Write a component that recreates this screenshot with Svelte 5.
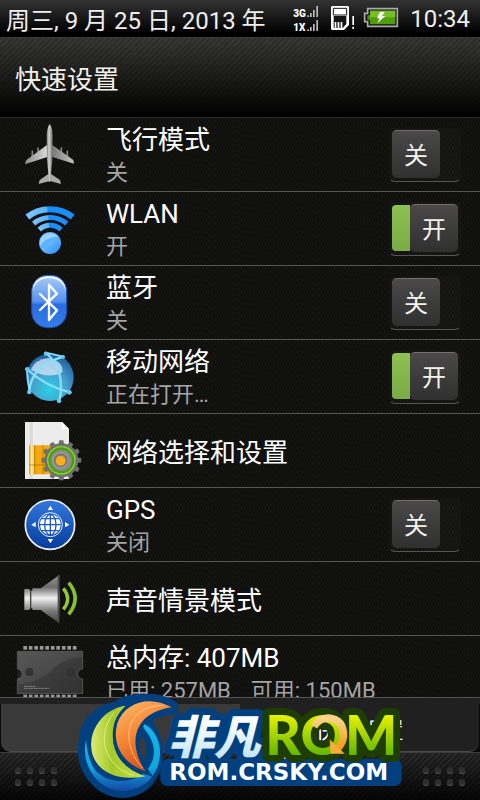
<script lang="ts">
	interface Setting {
		id: string;
		name: string;
		status?: string;
		detail?: string;
		on?: boolean;
	}

	let settings = $state<Setting[]>([
		{ id: 'airplane', name: '飞行模式', status: '关', on: false },
		{ id: 'wlan', name: 'WLAN', status: '开', on: true },
		{ id: 'bluetooth', name: '蓝牙', status: '关', on: false },
		{ id: 'mobile', name: '移动网络', status: '正在打开…', on: true },
		{ id: 'sim', name: '网络选择和设置' },
		{ id: 'gps', name: 'GPS', status: '关闭', on: false },
		{ id: 'sound', name: '声音情景模式' },
		{ id: 'memory', name: '总内存: 407MB', status: '已用: 257MB', detail: '可用: 150MB' }
	]);

	const teeth = Array.from({ length: 12 }, (_, i) => i * 30);
	const pins = Array.from({ length: 10 }, (_, i) => 70 + i * 16.5);

	function toggle(setting: Setting) {
		setting.on = !setting.on;
		setting.status = setting.on ? '开' : '关';
	}
</script>

{#snippet airplane()}
	<svg class="icon" viewBox="39 9 216 216">
		<defs>
			<linearGradient id="metal" x1="0" x2="1">
				<stop offset="0" stop-color="#8a8a8a" />
				<stop offset="0.45" stop-color="#d8d8d8" />
				<stop offset="0.5" stop-color="#ededed" />
				<stop offset="0.54" stop-color="#777" />
				<stop offset="1" stop-color="#c4c4c4" />
			</linearGradient>
			<linearGradient id="body" x1="0" x2="1">
				<stop offset="0" stop-color="#777" />
				<stop offset="0.4" stop-color="#d4d4d4" />
				<stop offset="1" stop-color="#686868" />
			</linearGradient>
		</defs>
		<path d="M97 105v18M114 96v18M184 96v18M202 105v18" stroke="#858585" stroke-width="5" stroke-linecap="round" />
		<path d="M141 87L78 133L75 145L142 123H157L222 143L220 132L157 87Z" fill="url(#metal)" />
		<path d="M145 174L119 192L116 204L150 195L183 204L180 192L153 174Z" fill="#aaa" />
		<path d="M149 24C156 32 158 46 158 60L157 130L151 197H147L141 130L140 60C140 46 143 32 149 24Z" fill="url(#body)" />
	</svg>
{/snippet}

{#snippet wlan()}
	<svg class="icon" viewBox="39 231 216 216">
		<defs>
			<linearGradient id="wave" x1="0" x2="1">
				<stop offset="0" stop-color="#7cc4ff" />
				<stop offset="0.42" stop-color="#5ab4ff" />
				<stop offset="0.46" stop-color="#1590ff" />
				<stop offset="1" stop-color="#1c8ffa" />
			</linearGradient>
			<linearGradient id="ball" x1="0" y1="0" x2="1" y2="1">
				<stop offset="0" stop-color="#4aa6fa" />
				<stop offset="0.5" stop-color="#62b6ff" />
				<stop offset="1" stop-color="#2a8cf0" />
			</linearGradient>
		</defs>
		<g fill="none" stroke="url(#wave)">
			<path d="M82 303A112 112 0 0 1 218 303" stroke-width="18" />
			<path d="M101 323A76 76 0 0 1 200 323" stroke-width="15" />
			<path d="M118 341A47 47 0 0 1 183 341" stroke-width="15" />
		</g>
		<circle cx="150" cy="381" r="33" fill="url(#ball)" />
		<path d="M122 391Q132 366 173 361Q152 343 130 358Q115 371 122 391Z" fill="#9bd3ff" />
	</svg>
{/snippet}

{#snippet bluetooth()}
	<svg class="icon" viewBox="39 3 216 216">
		<defs>
			<linearGradient id="bt" x1="0" y1="0" x2="0" y2="1">
				<stop offset="0" stop-color="#a9cdf8" />
				<stop offset="0.5" stop-color="#5791ee" />
				<stop offset="0.56" stop-color="#2a6ce2" />
				<stop offset="1" stop-color="#337eea" />
			</linearGradient>
		</defs>
		<rect x="95" y="28" width="105" height="157" rx="47" fill="url(#bt)" stroke="#1d4fa8" stroke-width="3" />
		<path d="M98 76Q98 32 147 31Q196 32 197 76Q188 38 147 37Q106 38 98 76Z" fill="#eaf5ff" />
		<path d="M120 84L171 133L147 162V56L171 83L120 132" fill="none" stroke="#fff" stroke-width="7" stroke-linejoin="round" stroke-linecap="round" />
	</svg>
{/snippet}

{#snippet mobile()}
	<svg class="icon" viewBox="39 225 216 216">
		<defs>
			<radialGradient id="globe" cx="0.48" cy="0.75" r="0.75">
				<stop offset="0" stop-color="#2bd0e4" />
				<stop offset="0.5" stop-color="#479fce" />
				<stop offset="1" stop-color="#1b5b9c" />
			</radialGradient>
		</defs>
		<circle cx="150" cy="334" r="71" fill="url(#globe)" />
		<path d="M92 312Q104 280 146 276Q188 284 188 318Q150 342 92 312Z" fill="#d5e9f8" opacity="0.75" />
		<g fill="none" stroke="#8be0fb" stroke-width="7" stroke-linecap="round">
			<path d="M80 309Q138 362 211 379" />
			<path d="M137 260Q198 310 178 407" />
			<path d="M88 377Q92 300 190 272" />
			<path d="M80 309L88 377M137 260L190 272" stroke-width="5" />
		</g>
		<g fill="#63c9ee">
			<circle cx="82" cy="310" r="7" />
			<circle cx="137" cy="263" r="6" />
			<circle cx="189" cy="273" r="6" />
			<circle cx="208" cy="379" r="7" />
			<circle cx="88" cy="378" r="7" />
			<circle cx="177" cy="404" r="7" />
		</g>
	</svg>
{/snippet}

{#snippet sim()}
	<svg class="icon" viewBox="39 6 216 216">
		<path d="M75 27H186L207 48V198H75Z" fill="#ececec" />
		<path d="M91 27V198M96 27V198" stroke="#c3c3c3" stroke-width="2" />
		<path d="M186 27V48H207Z" fill="#fff" />
		<path d="M87 97H188V184H87Z" fill="#f6a90c" />
		<path d="M94 97V184M99 97V184" stroke="#fff0c8" stroke-width="4" />
		<path d="M87 156H180M129 97V184M104 97V184" stroke="#9d6a00" stroke-width="2" />
		<g fill="#707070">
			{#each teeth as angle}
				<path d="M175 96L178 82H190L193 96Z" transform="rotate({angle} 184 142)" />
			{/each}
			<circle cx="184" cy="142" r="51" />
		</g>
		<circle cx="184" cy="142" r="38" fill="#8b8b8b" stroke="#4e9b13" stroke-width="12" />
		<circle cx="184" cy="142" r="41" fill="none" stroke="#8bd13c" stroke-width="4" />
		<circle cx="182" cy="142" r="23" fill="#777" stroke="#a7a7a7" stroke-width="3" />
		<circle cx="182" cy="143" r="15" fill="#f7ae19" />
	</svg>
{/snippet}

{#snippet gps()}
	<svg class="icon" viewBox="39 228 216 216">
		<defs>
			<linearGradient id="gps" x1="0" y1="0" x2="0" y2="1">
				<stop offset="0" stop-color="#3478de" />
				<stop offset="1" stop-color="#053c9c" />
			</linearGradient>
		</defs>
		<circle cx="150" cy="335" r="74" fill="url(#gps)" stroke="#f0f3f8" stroke-width="5" />
		<g fill="#fff">
			<path d="M151 278L159 291H143Z" />
			<path d="M151 391L159 378H143Z" />
			<path d="M94 335L107 327V343Z" />
			<path d="M208 335L195 327V343Z" />
			<circle cx="151" cy="335" r="31" />
		</g>
		<circle cx="151" cy="335" r="36" fill="none" stroke="#e4edfb" stroke-width="3" />
		<g fill="none" stroke="#1c5abd" stroke-width="4">
			<path d="M151 304V366M120 335H182M126 317H176M126 353H176" />
			<ellipse cx="151" cy="335" rx="17" ry="31" />
		</g>
	</svg>
{/snippet}

{#snippet sound()}
	<svg class="icon" viewBox="39 6 216 216">
		<defs>
			<linearGradient id="cone" x1="0" y1="0" x2="0" y2="1">
				<stop offset="0" stop-color="#969696" />
				<stop offset="0.25" stop-color="#6c6c6c" />
				<stop offset="0.48" stop-color="#f0f0f0" />
				<stop offset="0.75" stop-color="#777" />
				<stop offset="1" stop-color="#3f3f3f" />
			</linearGradient>
		</defs>
		<path d="M73 84H87L91 89H97V82H122L178 42V187L122 147H97V142H91L87 147H73Z" fill="url(#cone)" />
		<path d="M92 88V142" stroke="#444" stroke-width="4" />
		<path d="M175 44V184" stroke="#4c4c4c" stroke-width="4" />
		<path d="M190 82Q216 113 190 145" fill="none" stroke="#91c83d" stroke-width="10" />
		<path d="M206 65Q245 112 206 160" fill="none" stroke="#83bf37" stroke-width="11" />
	</svg>
{/snippet}

{#snippet memory()}
	<svg class="icon" viewBox="39 228 216 216">
		<defs>
			<linearGradient id="chip" x1="0" y1="0" x2="1" y2="1">
				<stop offset="0" stop-color="#4a4a4a" />
				<stop offset="0.5" stop-color="#3c3c3c" />
				<stop offset="1" stop-color="#303030" />
			</linearGradient>
		</defs>
		{#each pins as x}
			<rect {x} y="255" width="11" height="11" fill="#989898" />
			<rect {x} y="401" width="11" height="10" fill="#989898" />
		{/each}
		<path d="M52 271H248V324A13 13 0 0 0 248 354V398H52V354A13 13 0 0 0 52 324Z" fill="url(#chip)" stroke="#666" stroke-width="2" />
		<path d="M54 371Q130 360 166 318Q196 290 246 288V273H54Z" fill="#fff" opacity="0.07" />
		<circle cx="88" cy="333" r="11" fill="#343434" stroke="#292929" stroke-width="2" />
		<circle cx="213" cy="333" r="11" fill="#343434" stroke="#292929" stroke-width="2" />
		<path d="M72 376H106M72 382H148" stroke="#aaa" stroke-width="2" stroke-dasharray="4 1" />
	</svg>
{/snippet}

<div class="screen">
	<div class="status-bar">
		<span class="date">周三, 9 月 25 日, 2013 年</span>
		<svg class="status-icons" viewBox="159 21 318 81">
			<g fill="#fff">
				<text class="signal" x="160" y="57">3G</text>
				<text class="signal" x="160" y="99">1X</text>
				<path d="M202 52h5v5h-5zM210 45h5v12h-5zM219 36h5v21h-5zM229 24h5v33h-5z" fill="#bbb" />
				<path d="M202 94h5v5h-5zM210 87h5v12h-5zM219 78h5v21h-5zM229 66h5v33h-5z" fill="#bbb" />
				<path d="M276 24H324L327 27V81L312 96H276L273 93V27Z" />
				<path d="M337 54h5v27h-5zM337 86h5v7h-5z" />
			</g>
			<path d="M280 31H320V51H280Z" fill="#fff" stroke="#151515" stroke-width="3" />
			<path d="M281 54H319V78L309 89H281Z" fill="#151515" />
			<path d="M284 72h5v17h-5zM293 72h5v17h-5zM302 72h5v17h-5z" fill="#fff" />
			<path d="M383 32H472V85H383V71H374V46H383Z" fill="#111" stroke="#aaa" stroke-width="5" />
			<path d="M390 38H466V79H390V65H382V52H390Z" fill="#4f9d0a" />
			<path d="M390 38H466V58H390Z" fill="#78bd25" />
			<path d="M420 42H434L426 54H436L412 76L419 61H411Z" fill="#fff" />
		</svg>
		<time>10:34</time>
	</div>

	<header>
		<h1>快速设置</h1>
	</header>

	<ul class="settings">
		{#each settings as setting (setting.id)}
			<li class="row">
				{#if setting.id === 'airplane'}
					{@render airplane()}
				{:else if setting.id === 'wlan'}
					{@render wlan()}
				{:else if setting.id === 'bluetooth'}
					{@render bluetooth()}
				{:else if setting.id === 'mobile'}
					{@render mobile()}
				{:else if setting.id === 'sim'}
					{@render sim()}
				{:else if setting.id === 'gps'}
					{@render gps()}
				{:else if setting.id === 'sound'}
					{@render sound()}
				{:else}
					{@render memory()}
				{/if}
				<div class="label">
					<div class="name">{setting.name}</div>
					{#if setting.status}
						<div class="status">
							<span>{setting.status}</span>
							{#if setting.detail}<span>{setting.detail}</span>{/if}
						</div>
					{/if}
				</div>
				{#if setting.on !== undefined}
					<button
						class="switch"
						class:on={setting.on}
						type="button"
						role="switch"
						aria-checked={setting.on}
						aria-label={setting.name}
						onclick={() => toggle(setting)}
					>
						<span class="knob">{setting.on ? '开' : '关'}</span>
					</button>
				{/if}
			</li>
		{/each}
	</ul>

	<footer>
		<nav class="tabs">
			<button class="tab" type="button" aria-label="通知"></button>
			<button class="tab current" type="button">快速设置</button>
		</nav>
		<div class="handle">
			<div class="grip">
				{#each { length: 8 } as _}<i></i>{/each}
			</div>
			<div class="grip">
				{#each { length: 8 } as _}<i></i>{/each}
			</div>
		</div>

		<svg class="logo" viewBox="234 42 972 318">
			<defs>
				<linearGradient id="lime" x1="0" y1="0" x2="1" y2="0">
					<stop offset="0" stop-color="#dbe96e" />
					<stop offset="0.4" stop-color="#a4c92a" />
					<stop offset="1" stop-color="#c9df4b" />
				</linearGradient>
				<linearGradient id="orange" x1="0" y1="0" x2="0.5" y2="1">
					<stop offset="0" stop-color="#ffc06c" />
					<stop offset="0.5" stop-color="#f58634" />
					<stop offset="1" stop-color="#cf4f16" />
				</linearGradient>
				<linearGradient id="cyan" x1="0" y1="0" x2="0" y2="1">
					<stop offset="0" stop-color="#14b7e9" />
					<stop offset="0.65" stop-color="#10a6df" />
					<stop offset="1" stop-color="#1447a5" />
				</linearGradient>
				<linearGradient id="ice" x1="0" y1="0" x2="0" y2="1">
					<stop offset="0.3" stop-color="#fff" />
					<stop offset="1" stop-color="#b5def8" />
				</linearGradient>
				<linearGradient id="green" x1="0" y1="0" x2="0" y2="1">
					<stop offset="0.2" stop-color="#eaf300" />
					<stop offset="0.8" stop-color="#66b800" />
				</linearGradient>
				<linearGradient id="gold" x1="0" y1="0" x2="0" y2="1">
					<stop offset="0" stop-color="#f9d58c" />
					<stop offset="1" stop-color="#f39a17" />
				</linearGradient>
			</defs>

			<path d="M858 192L850 238H870Z" fill="#aaa" />

			<g fill="#00407f" stroke="#00407f" stroke-width="42" stroke-linejoin="round">
				<path d="M515 82C450 45 375 65 352 85C300 90 255 140 258 180C240 260 300 335 370 333C440 330 475 270 466 195C455 150 440 130 425 115Q455 92 515 82Z" />
				<path d="M502 258H1184V297H502Z" />
			</g>
			<path d="M258 180C240 260 300 335 370 333C450 330 490 260 478 195C470 160 450 140 432 133C428 138 430 143 434 148C468 190 470 230 445 265C415 310 330 320 285 270C265 240 262 210 258 180Z" fill="url(#cyan)" />
			<path d="M372 80C300 95 262 165 280 225C300 280 360 300 428 288C340 255 305 170 372 80Z" fill="url(#lime)" stroke="url(#lime)" stroke-width="4" />
			<path d="M342 98C282 175 320 262 400 286" fill="none" stroke="#f2f7b9" stroke-width="2" />
			<path
				class="orange"
				d="M515 82C450 45 375 65 352 130C335 190 365 250 437 274C385 200 392 100 515 82Z"
				fill="url(#orange)"
			/>
			<path d="M490 76C365 78 365 200 428 264" fill="none" stroke="#ffd9ae" stroke-width="2" />
			<path d="M424 166Q450 200 432 242Q412 205 424 166Z" fill="#3a3a3a" />

			<g class="cn">
				<text class="face" x="504" y="222">非凡</text>
			</g>
			<g class="rom">
				<text class="face" x="796" y="225">ROM</text>
			</g>
			<path d="M942 140Q957 114 985 114Q1032 118 1031 170Q1027 193 1011 207" fill="none" stroke="url(#gold)" stroke-width="22" />
			<path d="M989 178L992 221H1034Z" fill="#f7ad38" />
			<text class="site" x="508" y="301">ROM.CRSKY.COM</text>
		</svg>
	</footer>
</div>

<style>
	:global(body) {
		margin: 0;
		background: #000;
	}

	.screen {
		display: flex;
		flex-direction: column;
		height: 100vh;
		overflow: hidden;
		background: #0f0f0e;
		color: #fff;
		font-family: Roboto, 'Noto Sans CJK SC', sans-serif;
	}

	.status-bar {
		display: flex;
		align-items: center;
		flex-shrink: 0;
		box-sizing: border-box;
		height: 38px;
		padding: 0 10px 0 6px;
		border-bottom: 1px solid #3a3a38;
		background: linear-gradient(#333, #000 90%);
		color: #eee;
		font-size: 24px;
		white-space: nowrap;
	}

	.date {
		flex: 1;
	}

	.status-icons {
		width: 106px;
		height: 27px;
		margin-right: 11px;
		overflow: visible;
	}

	.signal {
		font-size: 30px;
		font-weight: 900;
	}

	header {
		display: flex;
		align-items: center;
		flex-shrink: 0;
		box-sizing: border-box;
		height: 80px;
		padding: 0 15px;
		border-bottom: 1px solid #2c2c2c;
		background:
			repeating-linear-gradient(135deg, rgba(0, 0, 0, 0.16) 0 2px, transparent 2px 4px),
			linear-gradient(#383836, #000);
	}

	h1 {
		margin: 0;
		font-size: 26px;
		font-weight: 400;
		color: #f1f0ea;
	}

	.settings {
		flex: 1;
		min-height: 0;
		margin: 0;
		padding: 0;
		overflow: hidden;
		list-style: none;
		background:
			repeating-linear-gradient(60deg, rgba(255, 255, 255, 0.02) 0 1px, transparent 1px 3px),
			repeating-linear-gradient(120deg, rgba(0, 0, 0, 0.25) 0 1px, transparent 1px 3px),
			#111110;
	}

	.row {
		display: flex;
		align-items: center;
		box-sizing: border-box;
		height: 74px;
		padding: 0 19px 0 13px;
		border-bottom: 1px solid #555;
	}

	.icon {
		flex-shrink: 0;
		width: 72px;
		height: 72px;
		margin-right: 21px;
	}

	.label {
		flex: 1;
		min-width: 0;
		padding-top: 4px;
		white-space: nowrap;
	}

	.name {
		font-size: 26px;
		line-height: 32px;
	}

	.status {
		display: flex;
		gap: 20px;
		color: #a5a5a5;
		font-size: 22px;
		line-height: 34px;
	}

	.switch {
		display: flex;
		box-sizing: border-box;
		width: 72px;
		height: 54px;
		padding: 1px 2px;
		border: 1px solid transparent;
		border-bottom-color: #555;
		border-radius: 6px;
		background: rgba(255, 255, 255, 0.02);
		color: #f3f2ec;
		font: inherit;
		cursor: pointer;
	}

	.switch.on::before {
		content: '';
		width: 18px;
		height: 46px;
		margin-top: 1px;
		border-radius: 4px 0 0 4px;
		background: linear-gradient(#8dc153, #7baa46);
	}

	.knob {
		display: flex;
		align-items: center;
		justify-content: center;
		box-sizing: border-box;
		width: 48px;
		height: 48px;
		padding-top: 4px;
		border-top: 1px solid #707070;
		border-radius: 5px;
		background: linear-gradient(#4a4848, #303030);
		font-size: 24px;
		line-height: 24px;
	}

	footer {
		position: relative;
		flex-shrink: 0;
		border-top: 1px solid #555;
		background: #080808;
	}

	.tabs {
		display: flex;
		padding: 0 1px;
		border-top: 6px solid #202020;
	}

	.tab {
		flex: 1;
		height: 48px;
		border: 0;
		border-bottom: 1px solid #4a4a4a;
		border-radius: 0 0 0 10px;
		background: #393939;
		color: #fff;
		font: inherit;
		font-size: 22px;
	}

	.tab.current {
		border-radius: 0 0 10px 0;
		background: #202020;
	}

	.handle {
		display: flex;
		justify-content: space-between;
		box-sizing: border-box;
		height: 48px;
		padding: 14px 15px;
		border-top: 1px solid #3c3c3c;
		background:
			repeating-linear-gradient(135deg, rgba(0, 0, 0, 0.3) 0 2px, transparent 2px 4px),
			linear-gradient(#2b2b2b, #050505);
	}

	.grip {
		display: grid;
		grid-template-columns: repeat(4, 6px);
		align-content: start;
		gap: 6px;
	}

	.grip i {
		height: 6px;
		border-radius: 50%;
		background: #2d2d2d;
		box-shadow: 0 1px 0 #555;
	}

	.logo {
		position: absolute;
		left: 50%;
		bottom: 0;
		width: 324px;
		height: 106px;
		transform: translateX(-50%);
		pointer-events: none;
	}

	.orange {
		paint-order: stroke;
		stroke: #00407f;
		stroke-width: 18px;
	}

	.face {
		paint-order: stroke;
		stroke-width: 42px;
		stroke-linejoin: round;
	}

	.cn {
		font-family: 'Noto Sans CJK SC', sans-serif;
		font-size: 138px;
		font-weight: 900;
		font-style: italic;
	}

	.cn .face {
		fill: url(#ice);
		stroke: #00407f;
	}

	.rom {
		font-family: Lato, sans-serif;
		font-size: 165px;
		font-weight: 900;
	}

	.rom .face {
		fill: url(#green);
		stroke: #1e3d00;
	}

	.site {
		fill: #fff;
		font-family: 'DejaVu Sans', sans-serif;
		font-size: 69px;
		font-weight: 700;
	}
</style>
